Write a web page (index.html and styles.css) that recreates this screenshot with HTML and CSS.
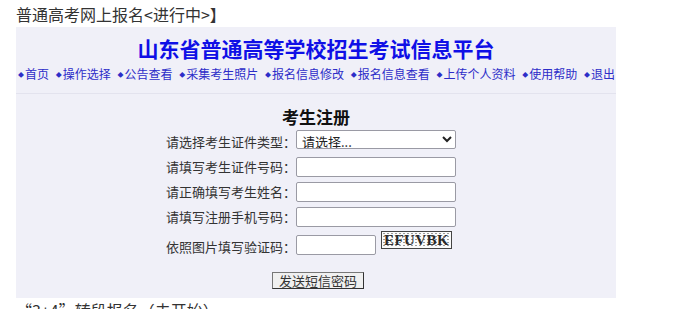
FILE: index.html
```html
<!DOCTYPE html>
<html>

<head>
  <meta charset="utf-8">
  <title>山东省普通高等学校招生考试信息平台</title>
  <link rel="stylesheet" href="styles.css">
</head>

<body>
  <div class="status-line">普通高考网上报名&lt;进行中&gt;】</div>

  <div class="panel">
    <!-- Site header and menu -->
    <div class="head">
      <h1>山东省普通高等学校招生考试信息平台</h1>
      <div class="menu">
        <a href="#"><span class="dot">◆</span>首页</a>
        <a href="#"><span class="dot">◆</span>操作选择</a>
        <a href="#"><span class="dot">◆</span>公告查看</a>
        <a href="#"><span class="dot">◆</span>采集考生照片</a>
        <a href="#"><span class="dot">◆</span>报名信息修改</a>
        <a href="#"><span class="dot">◆</span>报名信息查看</a>
        <a href="#"><span class="dot">◆</span>上传个人资料</a>
        <a href="#"><span class="dot">◆</span>使用帮助</a>
        <a href="#"><span class="dot">◆</span>退出</a>
      </div>
    </div>

    <!-- Registration form -->
    <div class="reg">
      <h2>考生注册</h2>
      <div class="row">
        <label for="idType">请选择考生证件类型：</label>
        <select id="idType">
          <option>请选择...</option>
        </select>
      </div>
      <div class="row">
        <label for="idNo">请填写考生证件号码：</label>
        <input type="text" id="idNo">
      </div>
      <div class="row">
        <label for="name">请正确填写考生姓名：</label>
        <input type="text" id="name">
      </div>
      <div class="row">
        <label for="phone">请填写注册手机号码：</label>
        <input type="text" id="phone">
      </div>
      <div class="row row-code">
        <label for="code">依照图片填写验证码：</label>
        <input type="text" id="code" class="code-input">
        <span class="captcha">EFUVBK</span>
      </div>
      <div class="actions">
        <button type="button" class="send-btn">发送短信密码</button>
      </div>
    </div>
  </div>

  <div class="status-line next">“3+4”转段报名（未开始）</div>
</body>

</html>
```

FILE: styles.css
```css
/* Page basics */
body {
  margin: 0;
  padding: 4px 16px 0;
  font-family: "Noto Sans CJK SC", "Microsoft YaHei", sans-serif;
  color: #333;
  background: #fff;
}

.status-line {
  font-size: 16px;
  line-height: 20px;
  color: #333;
}

.status-line.next {
  margin-top: 2px;
}

/* Light lavender box around header + form */
.panel {
  width: 600px;
  margin-top: 3px;
  background-color: #f0f0f8;
}

.head {
  text-align: center;
  border-bottom: 1px solid #e3e3ee;
  padding-bottom: 10px;
}

h1 {
  margin: 0;
  padding-top: 8px;
  font-size: 21px;
  line-height: 26px;
  font-weight: bold;
  color: #0f0fe6;
}

.menu {
  margin-top: 5px;
  display: flex;
  justify-content: space-between;
  padding: 0 1px 0 2px;
  font-size: 12px;
  line-height: 16px;
  white-space: nowrap;
}

.menu a {
  color: #2d2dc8;
  text-decoration: none;
}

.dot {
  font-size: 6px;
  vertical-align: 2px;
  margin-right: 1px;
}

/* Form */
.reg {
  padding-bottom: 9px;
}

h2 {
  margin: 12px 0 1px;
  text-align: center;
  font-size: 17px;
  line-height: 22px;
  font-weight: bold;
  color: #111;
}

.row {
  display: flex;
  align-items: center;
  height: 25px;
  font-size: 13px;
}

.row label {
  width: 280px;
  text-align: right;
  color: #333;
}

.row input,
.row select {
  box-sizing: border-box;
  width: 160px;
  height: 20px;
  margin: 0;
  border: 1px solid #9a9aa4;
  border-radius: 2px;
  background: #fff;
  font-family: inherit;
  font-size: 13px;
  padding: 0 4px;
}

.row select {
  height: 19px;
  margin-top: -4px;
  padding: 0 1px;
  line-height: 17px;
  color: #222;
}

.row-code {
  height: 33px;
  align-items: flex-start;
}

.row-code label {
  margin-top: 8px;
}

.row .code-input {
  width: 80px;
  margin-top: 6px;
}

.captcha {
  margin-left: 5px;
  margin-top: 2px;
  box-sizing: border-box;
  width: 71px;
  height: 18px;
  border: 1px solid #444;
  background-color: #fbfbfb;
  background-image: radial-gradient(#9a9a9a 0.6px, transparent 0.8px);
  background-size: 4px 3px;
  font-family: "Liberation Serif", serif;
  font-weight: bold;
  font-size: 15px;
  line-height: 16px;
  text-align: center;
  color: #2a2a2a;
  letter-spacing: 0.4px;
}

.actions {
  display: flex;
  justify-content: center;
  margin-top: 10px;
  padding-left: 4px;
}

.send-btn {
  box-sizing: border-box;
  width: 92px;
  height: 17px;
  padding: 0;
  border: 1px solid #333;
  border-top-color: #777;
  border-left-color: #777;
  border-radius: 0;
  background: #f0f0f0;
  font-family: inherit;
  font-size: 13px;
  line-height: 15px;
  color: #333;
}
```
